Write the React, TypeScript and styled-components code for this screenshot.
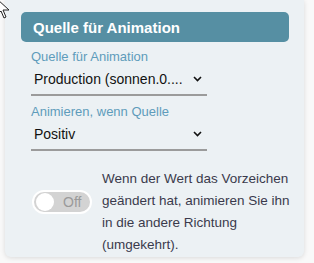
import styled, { createGlobalStyle } from "styled-components"

const Global = createGlobalStyle`
  body{
    margin:0;
    background:#f9f9f9;
    font-family:"Liberation Sans", Arial, sans-serif;
  }
`

const Page = styled.div`
  position:relative;
  width:314px;
  height:263px;
  overflow:hidden;
`

const Panel = styled.section`
  margin-left:5px;
  width:299px;
  background:#ecf1f4;
  border-radius:0 0 6px 6px;
  box-shadow:0 1px 5px rgba(0,0,0,0.13);
  padding:12px 0 1px;
  box-sizing:border-box;
`

const Header = styled.div`
  margin:0 15px 0 16px;
  height:30px;
  border-radius:5px;
  background:#568fa3;
  color:#fff;
  font-weight:bold;
  font-size:15px;
  display:flex;
  align-items:center;
  padding-left:12px;
`

const Field = styled.div`
  margin:${({first}:{first?:boolean})=>first?"7px":"8px"} 0 0 26px;
  width:176px;
`

const Label = styled.div`
  font-size:13px;
  line-height:16px;
  color:#5e9cbb;
`

const Select = styled.div`
  display:flex;
  align-items:center;
  justify-content:space-between;
  padding:4px 5px 5px 3px;
  border-bottom:2px solid #9b9b9b;
  font-size:14px;
  line-height:20px;
  color:#111;
  white-space:nowrap;
`

const Row = styled.div`
  display:flex;
  align-items:flex-start;
  margin:17px 0 0 27px;
`

const Toggle = styled.div`
  margin-top:22px;
  width:52px;
  height:20px;
  border:2px solid #fff;
  border-radius:12px;
  background:#d3d3d3;
  display:flex;
  align-items:center;
  padding:0 2px;
  box-sizing:content-box;
  flex-shrink:0;
`

const Knob = styled.div`
  width:18px;
  height:18px;
  border-radius:50%;
  background:#fff;
`

const ToggleText = styled.span`
  margin-left:9px;
  font-size:14px;
  color:#9a9a9a;
`

const Note = styled.p`
  margin:0 0 0 10px;
  width:190px;
  font-size:13.5px;
  line-height:22px;
  color:#3a3a4c;
`

const Cursor = styled.svg`
  position:absolute;
  left:-4px;
  top:-2px;
`

const Chevron = () => (
  <svg width="9" height="6" viewBox="0 0 9 6">
    <path d="M1 1l3.5 3.5L8 1" fill="none" stroke="#111" strokeWidth="1.6"/>
  </svg>
)

export default function App(){
  return (
    <Page>
      <Global/>
      <Panel>
        <Header>Quelle für Animation</Header>
        <Field first>
          <Label>Quelle für Animation</Label>
          <Select>
            <span>Production (sonnen.0....</span>
            <Chevron/>
          </Select>
        </Field>
        <Field>
          <Label>Animieren, wenn Quelle</Label>
          <Select>
            <span>Positiv</span>
            <Chevron/>
          </Select>
        </Field>
        <Row>
          <Toggle>
            <Knob/>
            <ToggleText>Off</ToggleText>
          </Toggle>
          <Note>Wenn der Wert das Vorzeichen geändert hat, animieren Sie ihn in die andere Richtung (umgekehrt).</Note>
        </Row>
      </Panel>
      <Cursor width="14" height="22" viewBox="0 0 14 22">
        <path d="M1 1v16l4-4 3 7 2-1-3-7h6z" fill="#fff" stroke="#222" strokeWidth="1"/>
      </Cursor>
    </Page>
  )
}
